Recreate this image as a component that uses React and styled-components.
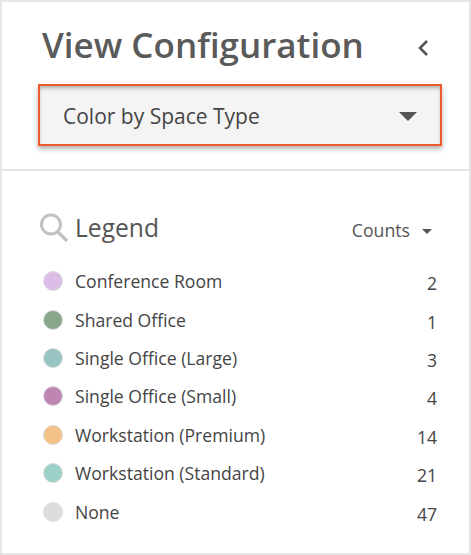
import styled, { createGlobalStyle } from "styled-components";

const GlobalStyle = createGlobalStyle`
  html, body {
    margin: 0;
    padding: 0;
    background: #e6e6e6;
  }
  body {
    font-family: "Open Sans", "Liberation Sans", sans-serif;
  }
`;

const items = [
  { name: "Conference Room", count: 2, color: "#dcbde8" },
  { name: "Shared Office", count: 1, color: "#8ba78b" },
  { name: "Single Office (Large)", count: 3, color: "#98c4c2" },
  { name: "Single Office (Small)", count: 4, color: "#bf85b3" },
  { name: "Workstation (Premium)", count: 14, color: "#f3c286" },
  { name: "Workstation (Standard)", count: 21, color: "#9bd0c7" },
  { name: "None", count: 47, color: "#dddddd" },
];

export default function App() {
  return (
    <>
      <GlobalStyle />
      <Panel>
        <Header>
          <TitleRow>
            <Title>View Configuration</Title>
            <BackIcon width="14" height="18" viewBox="0 0 14 18">
              <path d="M11 2 L4 9 L11 16" fill="none" stroke="#555" strokeWidth="2.6" />
            </BackIcon>
          </TitleRow>
          <Select>
            <span>Color by Space Type</span>
            <Caret />
          </Select>
        </Header>
        <Legend>
          <LegendHead>
            <LegendTitle>
              <svg width="32" height="32" viewBox="0 0 32 32">
                <circle cx="13" cy="12.5" r="9.5" fill="none" stroke="#c2c2c2" strokeWidth="3" />
                <path d="M20 20 L29 29" stroke="#c2c2c2" strokeWidth="3.4" />
              </svg>
              <h2>Legend</h2>
            </LegendTitle>
            <Counts>
              Counts
              <SmallCaret />
            </Counts>
          </LegendHead>
          <List>
            {items.map((item) => (
              <Row key={item.name}>
                <Dot $color={item.color} />
                <Name>{item.name}</Name>
                <Count>{item.count}</Count>
              </Row>
            ))}
          </List>
        </Legend>
      </Panel>
    </>
  );
}

const Panel = styled.div`
  width: 467px;
  height: 553px;
  box-sizing: border-box;
  margin-left: 2px;
  padding-top: 2px;
  display: flex;
  flex-direction: column;
  gap: 2px;
`;

const Header = styled.header`
  height: 167px;
  box-sizing: border-box;
  background: #fff;
  padding: 21px 27px 0 36px;
`;

const TitleRow = styled.div`
  display: flex;
  align-items: center;
  justify-content: space-between;
  padding: 0 12px 0 4px;
  height: 44px;
`;

const Title = styled.h1`
  margin: 0;
  font-size: 35px;
  line-height: 44px;
  font-weight: 600;
  color: #5a5a5a;
`;

const BackIcon = styled.svg`
  margin-top: 6px;
`;

const Select = styled.div`
  margin-top: 17px;
  height: 62px;
  box-sizing: border-box;
  border: 2px solid #ee5a2b;
  background: #f4f4f4;
  box-shadow: inset 0 3px 4px -1px rgba(0, 0, 0, 0.3), 0 3px 5px rgba(0, 0, 0, 0.3);
  display: flex;
  align-items: center;
  justify-content: space-between;
  padding: 1px 23px 0 23px;
  font-size: 21px;
  color: #444;
`;

const Caret = styled.div`
  width: 0;
  height: 0;
  margin-top: 2px;
  border-left: 9px solid transparent;
  border-right: 9px solid transparent;
  border-top: 9px solid #555;
`;

const Legend = styled.section`
  flex: 1;
  background: #fff;
  padding: 39px 30px 0 38px;
`;

const LegendHead = styled.div`
  display: flex;
  align-items: center;
  justify-content: space-between;
  height: 36px;
`;

const LegendTitle = styled.div`
  display: flex;
  align-items: center;
  gap: 5px;
  margin-left: -2px;

  h2 {
    margin: -1px 0 0;
    font-size: 24.6px;
    font-weight: 400;
    color: #555;
  }
`;

const Counts = styled.div`
  display: flex;
  align-items: center;
  gap: 12px;
  margin-top: 3px;
  font-size: 17.7px;
  color: #555;
  padding-right: 7px;
`;

const SmallCaret = styled.span`
  width: 0;
  height: 0;
  margin-top: 3px;
  border-left: 5.5px solid transparent;
  border-right: 5.5px solid transparent;
  border-top: 5px solid #555;
`;

const List = styled.ul`
  list-style: none;
  margin: 16px 0 0;
  padding: 0;
`;

const Row = styled.li`
  display: flex;
  align-items: center;
  height: 38.4px;
  font-size: 17.6px;
  color: #444;
`;

const Dot = styled.span`
  width: 18px;
  height: 18px;
  margin: 0 12px 0 3px;
  border-radius: 50%;
  background: ${(p) => p.$color};
  border: 1px solid #ddd;
`;

const Name = styled.span`
  flex: 1;
`;

const Count = styled.span`
  margin-top: 4px;
  padding-right: 2px;
`;
